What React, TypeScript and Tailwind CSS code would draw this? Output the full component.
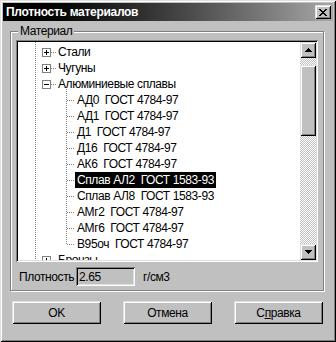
import React from "react";

const raised =
  "shadow-[inset_1px_1px_0_#dfdfdf,inset_-1px_-1px_0_#000,inset_2px_2px_0_#fff,inset_-2px_-2px_0_#808080]";
const sunken =
  "shadow-[inset_1px_1px_0_#808080,inset_-1px_-1px_0_#fff,inset_2px_2px_0_#000,inset_-2px_-2px_0_#dfdfdf]";

type Item = { label: string; level: 0 | 1; box?: "+" | "-"; selected?: boolean };

const items: Item[] = [
  { label: "Стали", level: 0, box: "+" },
  { label: "Чугуны", level: 0, box: "+" },
  { label: "Алюминиевые сплавы", level: 0, box: "-" },
  { label: "АД0  ГОСТ 4784-97", level: 1 },
  { label: "АД1  ГОСТ 4784-97", level: 1 },
  { label: "Д1  ГОСТ 4784-97", level: 1 },
  { label: "Д16  ГОСТ 4784-97", level: 1 },
  { label: "АК6  ГОСТ 4784-97", level: 1 },
  { label: "Сплав АЛ2  ГОСТ 1583-93", level: 1, selected: true },
  { label: "Сплав АЛ8  ГОСТ 1583-93", level: 1 },
  { label: "АМг2  ГОСТ 4784-97", level: 1 },
  { label: "АМг6  ГОСТ 4784-97", level: 1 },
  { label: "В95оч  ГОСТ 4784-97", level: 1 },
  { label: "Бронзы", level: 0, box: "+" },
];

function TreeLines() {
  const rowTop = 2;
  const rh = 16;
  const cy = (i: number) => rowTop + i * rh + 8;
  const segs: React.ReactNode[] = [];
  segs.push(<line key="v0" x1={17.5} y1={0} x2={17.5} y2={220} />);
  segs.push(<line key="v2" x1={48.5} y1={cy(2) + 5} x2={48.5} y2={cy(12)} />);
  items.forEach((it, i) => {
    const y = cy(i) + 0.5;
    if (it.level === 0) {
      segs.push(<line key={"h" + i} x1={33} y1={y} x2={38} y2={y} />);
    } else {
      segs.push(<line key={"h" + i} x1={49} y1={y} x2={56} y2={y} />);
    }
  });
  return (
    <svg
      className="absolute left-0 top-0"
      width={282}
      height={218}
      stroke="#808080"
      strokeWidth={1}
      strokeDasharray="1 1"
      shapeRendering="crispEdges"
    >
      {segs}
    </svg>
  );
}

function Box({ sign }: { sign: "+" | "-" }) {
  return (
    <div className="w-[9px] h-[9px] border border-[#808080] bg-white relative flex items-center justify-center">
      <div className="w-[5px] h-[1px] bg-black" />
      {sign === "+" && <div className="absolute w-[1px] h-[5px] bg-black" />}
    </div>
  );
}

function ScrollBtn({ dir }: { dir: "up" | "down" }) {
  return (
    <div className={`w-[16px] h-[16px] bg-[#c0c0c0] flex items-center justify-center ${raised}`}>
      <svg width="7" height="4" viewBox="0 0 7 4" shapeRendering="crispEdges">
        {dir === "up" ? (
          <path d="M3 0h1v1h1v1h1v1h1v1H0V3h1V2h1V1h1z" fill="#000" />
        ) : (
          <path d="M0 0h7v1H6v1H5v1H4v1H3V3H2V2H1V1H0z" fill="#000" />
        )}
      </svg>
    </div>
  );
}

const checker =
  "bg-[repeating-conic-gradient(#c0c0c0_0%_25%,#ffffff_0%_50%)] bg-[length:2px_2px]";

export default function App() {
  return (
    <div
      className={`w-[336px] h-[342px] bg-[#c0c0c0] p-[3px] flex flex-col text-[12px] tracking-[-0.4px] text-black font-['Liberation_Sans',Arial,sans-serif] ${raised}`}
    >
      {/* title bar */}
      <div className="h-[18px] flex items-center justify-between bg-linear-to-r from-black to-[#a8a8a8] pl-[3px] pr-[2px]">
        <span className="text-white font-bold text-[12px] tracking-[-0.3px] leading-none">Плотность материалов</span>
        <div className={`w-[16px] h-[14px] bg-[#c0c0c0] flex items-center justify-center ${raised}`}>
          <svg width="8" height="7" viewBox="0 0 8 7" shapeRendering="crispEdges">
            <path
              d="M0 0h2v1h1v1h2V1h1V0h2v1H7v1H6v1H5v1h1v1h1v1h1v1H6V6H5V5H3v1H2v1H0V6h1V5h1V4h1V3H2V2H1V1H0z"
              fill="#000"
            />
          </svg>
        </div>
      </div>

      {/* group box */}
      <div className="ml-[7px] mt-[10px] w-[314px] h-[260px] relative border border-[#808080] shadow-[inset_1px_1px_0_#fff,1px_1px_0_#fff] pt-[8px] pl-[5px] flex flex-col">
        <span className="absolute left-[7px] -top-[8px] bg-[#c0c0c0] px-[2px] leading-[14px]">Материал</span>

        {/* tree view */}
        <div className={`w-[302px] h-[222px] bg-white p-[2px] flex ${sunken}`}>
          <div className="relative flex-1 overflow-hidden pt-[2px]">
            <TreeLines />
            {items.map((it, i) => (
              <div key={i} className="h-[16px] flex items-center relative">
                {it.level === 0 ? (
                  <>
                    <div className="ml-[24px] w-[9px]">{it.box && <Box sign={it.box} />}</div>
                    <span className="ml-[7px] leading-[14px] whitespace-pre">{it.label}</span>
                  </>
                ) : (
                  <span
                    className={`ml-[57px] px-[2px] leading-[16px] h-[16px] whitespace-pre ${
                      it.selected ? "bg-black text-white" : ""
                    }`}
                  >
                    {it.label}
                  </span>
                )}
              </div>
            ))}
          </div>
          <div className="w-[16px] flex flex-col">
            <ScrollBtn dir="up" />
            <div className={`h-[7px] ${checker}`} />
            <div className={`h-[71px] bg-[#c0c0c0] ${raised}`} />
            <div className={`flex-1 ${checker}`} />
            <ScrollBtn dir="down" />
          </div>
        </div>

        {/* density row */}
        <div className="flex items-center mt-[5px] h-[19px]">
          <span className="ml-[3px] w-[57px]">Плотность</span>
          <div className={`w-[59px] h-[19px] bg-[#c0c0c0] pl-[3px] flex items-center ${sunken}`}>2.65</div>
          <span className="ml-[8px]">г/см3</span>
        </div>
      </div>

      {/* buttons */}
      <div className="mt-[10px] ml-[9px] flex gap-[22px]">
        {["OK", "Отмена"].map((t) => (
          <div key={t} className={`w-[89px] h-[23px] flex items-center justify-center ${raised}`}>
            {t}
          </div>
        ))}
        <div className={`w-[89px] h-[23px] flex items-center justify-center ${raised}`}>
          <span>
            С<span className="underline">п</span>равка
          </span>
        </div>
      </div>
    </div>
  );
}
